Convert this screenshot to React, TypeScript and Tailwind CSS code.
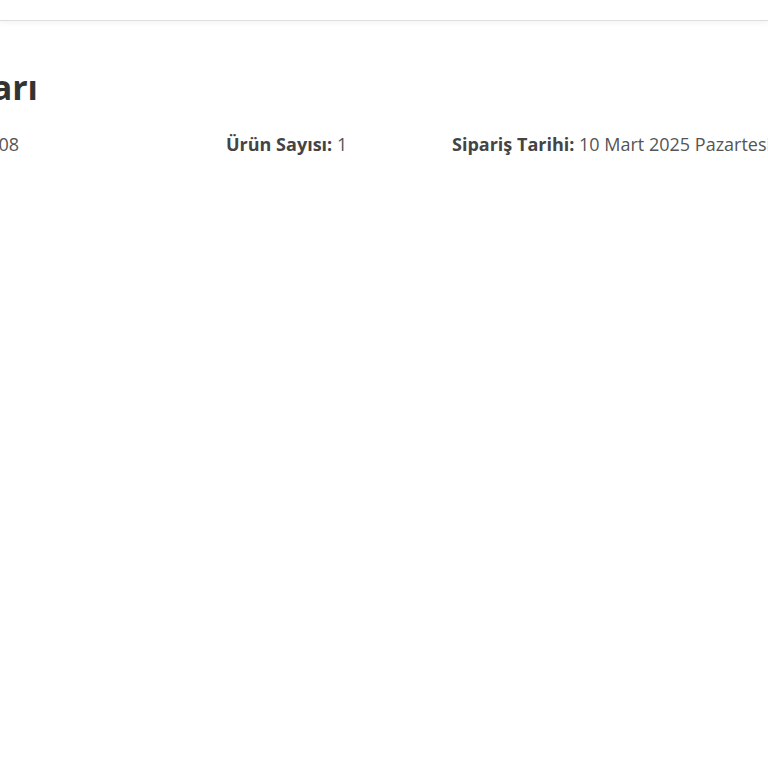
export default function App() {
  return (
    <div className="min-h-screen w-full overflow-hidden bg-white text-[#333] font-['Open_Sans',sans-serif]">
      {/* Header */}
      <div className="h-[21px] border-b border-[#dedede] bg-white shadow-[0_2px_6px_rgba(0,0,0,0.05)]" />

      <div className="pt-[46px]">
        {/* Title, left part cut off by the viewport */}
        <div className="flex w-[38px] justify-end">
          <h1 className="whitespace-nowrap text-[34px] font-bold leading-[40px] text-[#333]">Sipariş Detayları</h1>
        </div>

        {/* Info row */}
        <div className="mt-[24px] flex items-center text-[18px] leading-[26px] text-[#555]">
          <div className="flex w-[19px] shrink-0 justify-end">
            <span className="whitespace-nowrap">
              <b className="font-bold text-[#444]">Sipariş No:</b> 2025031008
            </span>
          </div>
          <div className="ml-[207px] w-[226px] shrink-0 whitespace-nowrap">
            <b className="font-bold text-[#444]">Ürün Sayısı:</b> 1
          </div>
          <div className="shrink-0 whitespace-nowrap">
            <b className="font-bold text-[#444]">Sipariş Tarihi:</b> 10 Mart 2025 Pazartesi
          </div>
        </div>
      </div>
    </div>
  );
}
